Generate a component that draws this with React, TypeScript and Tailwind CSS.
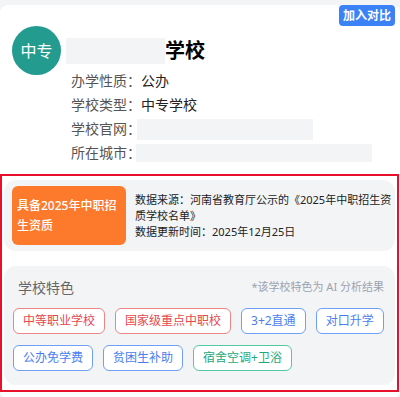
import React from "react";

const tags = [
  { text: "中等职业学校", tone: "red" },
  { text: "国家级重点中职校", tone: "red" },
  { text: "3+2直通", tone: "blue" },
  { text: "对口升学", tone: "blue" },
  { text: "公办免学费", tone: "blue" },
  { text: "贫困生补助", tone: "blue" },
  { text: "宿舍空调+卫浴", tone: "green" },
];

const toneClass: Record<string, string> = {
  red: "border-[#ee8585] text-[#e5484d]",
  blue: "border-[#6f9ff7] text-[#4a7ef0]",
  green: "border-[#52c9a2] text-[#1ea87a]",
};

export default function App() {
  return (
    <div
      className="w-[400px] h-[397px] overflow-hidden bg-[#f3f4f6] pt-[5px]"
      style={{ fontFamily: '"Noto Sans", "Noto Sans CJK SC", sans-serif' }}
    >
      <div className="relative bg-white rounded-lg pb-[6px]">
        {/* compare button */}
        <button className="absolute right-[5px] top-0 h-[21px] px-[4px] rounded-[4px] bg-[#3b82f6] text-white text-xs font-bold leading-[21px]">
          加入对比
        </button>

        {/* header */}
        <div className="flex">
          <div className="ml-[12px] mt-[21px] w-[49px] h-[49px] rounded-full bg-[#239c8f] flex items-center justify-center text-white text-[16px] shrink-0">
            中专
          </div>
          <div className="ml-[5px] mt-[33px]">
            <div className="flex items-center h-[26px]">
              <div className="w-[99px] h-[26px] bg-[#f3f4f6]"></div>
              <span className="text-[20px] font-bold text-black leading-[26px]">学校</span>
            </div>
            <div className="mt-[5px] ml-[5px] text-[14px] leading-6">
              <div className="flex items-center">
                <span className="text-[#555]">办学性质：</span>
                <span className="text-[#222]">公办</span>
              </div>
              <div className="flex items-center">
                <span className="text-[#555]">学校类型：</span>
                <span className="text-[#222]">中专学校</span>
              </div>
              <div className="flex items-center">
                <span className="text-[#555]">学校官网：</span>
                <span className="w-[176px] h-[21px] bg-[#f3f4f6] -ml-[4px]"></span>
              </div>
              <div className="flex items-center">
                <span className="text-[#555]">所在城市：</span>
                <span className="w-[236px] h-[18px] bg-[#f3f4f6] -ml-[5px]"></span>
              </div>
            </div>
          </div>
        </div>

        {/* highlighted region */}
        <div className="mt-[9px] mr-[1px] border-2 border-[#e8102a] px-[2px] pt-[4px] pb-[5px]">
          <div className="flex items-center h-[71px] rounded-xl bg-[#f3f4f6] px-[8px]">
            <div className="w-[114px] h-[59px] shrink-0 rounded-md bg-[#fd7a2d] text-white text-[12px] font-medium leading-5 px-[5px] flex items-center">
              <span>
                具备2025年中职招
                <br />
                生资质
              </span>
            </div>
            <div className="ml-[9px] text-[11px] leading-4 text-[#222] whitespace-nowrap">
              <div>数据来源：河南省教育厅公示的《2025年中职招生资</div>
              <div>质学校名单》</div>
              <div>数据更新时间：2025年12月25日</div>
            </div>
          </div>

          <div className="mt-[15px] rounded-xl bg-[#f3f4f6] pl-[9px] pr-[9px] pt-[11px] pb-[14px]">
            <div className="flex items-center justify-between h-5">
              <span className="pl-[5px] text-[14px] text-[#666]">学校特色</span>
              <span className="pr-[2px] text-[11px] text-[#9ca3af]">*该学校特色为 AI 分析结果</span>
            </div>
            <div className="mt-[11px] flex flex-wrap gap-x-[10px] gap-y-[11px]">
              {tags.map((t) => (
                <span
                  key={t.text}
                  className={`h-[26px] px-[9px] rounded-md border bg-white text-xs leading-[24px] whitespace-nowrap ${toneClass[t.tone]}`}
                >
                  {t.text}
                </span>
              ))}
            </div>
          </div>
        </div>
      </div>
    </div>
  );
}
